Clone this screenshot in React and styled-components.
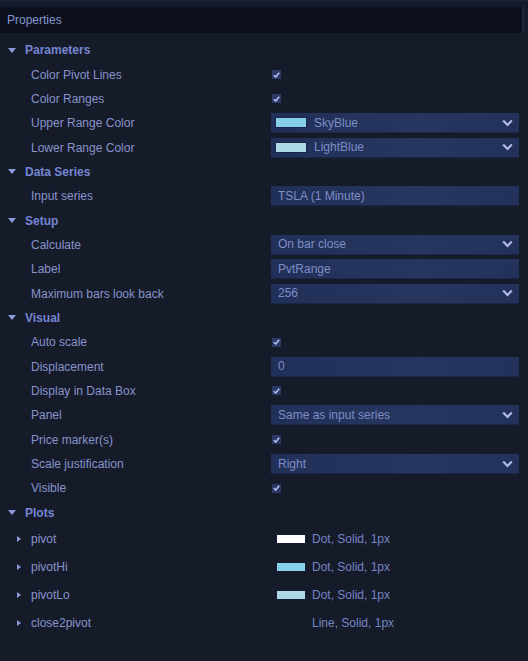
import React from 'react'
import styled, { createGlobalStyle } from 'styled-components'

const GlobalStyle = createGlobalStyle`
    html, body {
        margin: 0;
        padding: 0;
        background: #161b2a;
    }
    body {
        font-family: "Liberation Sans", Arial, sans-serif;
        font-size: 12px;
    }
`

const Panel = styled.div`
    width: 528px;
    height: 661px;
    background: #161b2a;
    overflow: hidden;
    display: flex;
    flex-direction: column;
    padding-top: 5px;
    box-sizing: border-box;
    border-top: 1px solid #1d2335;
`

const TitleBar = styled.div`
    height: 27px;
    margin-right: 4px;
    background: #0b0f1c;
    border-top: 1px solid #10162a;
    border-right: 2px solid #1e2538;
    display: flex;
    align-items: center;
    padding-left: 7px;
    padding-bottom: 1px;
    color: #8797cf;
    font-size: 12px;
    box-sizing: border-box;
`

const List = styled.div`
    display: flex;
    flex-direction: column;
    padding-top: 5px;
`

const Row = styled.div`
    height: ${p => (p.$plot ? 28 : 24.35)}px;
    display: grid;
    grid-template-columns: 271px 248px;
    align-items: center;
`

const SectionRow = styled.div`
    height: 24.35px;
    display: flex;
    align-items: center;
    gap: 9px;
    padding-left: 8px;
    color: #7486d2;
    font-weight: bold;
    font-size: 12px;
`

const DownArrow = styled.span`
    width: 0;
    height: 0;
    border-left: 4px solid transparent;
    border-right: 4px solid transparent;
    border-top: 5px solid #8a9ad8;
`

const RightArrow = styled.span`
    width: 0;
    height: 0;
    border-top: 3.5px solid transparent;
    border-bottom: 3.5px solid transparent;
    border-left: 4px solid #8a9ad8;
`

const Label = styled.div`
    padding-left: 31px;
    color: #8893cb;
    white-space: nowrap;
`

const PlotLabel = styled.div`
    display: flex;
    align-items: center;
    gap: 10px;
    padding-left: 17px;
    color: #8893cb;
`

const Check = styled.span`
    width: 9px;
    height: 9px;
    margin-left: 1px;
    background: #2a3966;
    display: flex;
    align-items: center;
    justify-content: center;
`

const Field = styled.div`
    height: 20px;
    display: flex;
    align-items: center;
    padding-left: ${p => (p.$swatch ? 5 : 7)}px;
    padding-right: 6px;
    gap: 8px;
    background: linear-gradient(90deg, #213058 0%, #26365f 60%, #23325a 100%);
    border-bottom: 1px solid #1b2646;
    color: #7f8dc6;
    box-sizing: border-box;
`

const FieldText = styled.span`
    flex: 1;
    white-space: nowrap;
`

const Swatch = styled.span`
    width: ${p => p.$w || 30}px;
    height: ${p => p.$h || 9}px;
    background: ${p => p.$color};
    box-shadow: 0 0 0 1px rgba(20, 30, 60, 0.6);
    flex-shrink: 0;
`

const PlotValue = styled.div`
    display: flex;
    align-items: center;
    gap: 7px;
    padding-left: ${p => (p.$noSwatch ? 41 : 6)}px;
    color: #7584c4;
`

const CheckIcon = () => (
    <svg width="7" height="6" viewBox="0 0 7 6">
        <path d="M0.8 3.2 L2.7 5 L6.2 0.8" fill="none" stroke="#b8c2ee" strokeWidth="1.5" />
    </svg>
)

const Chevron = () => (
    <svg width="11" height="8" viewBox="0 0 11 8">
        <path d="M1.2 1.5 L5.5 6 L9.8 1.5" fill="none" stroke="#aeb9ec" strokeWidth="2.2" />
    </svg>
)

const Section = ({ title }) => (
    <SectionRow>
        <DownArrow />
        {title}
    </SectionRow>
)

const CheckRow = ({ label }) => (
    <Row>
        <Label>{label}</Label>
        <div><Check><CheckIcon /></Check></div>
    </Row>
)

const InputRow = ({ label, value }) => (
    <Row>
        <Label>{label}</Label>
        <Field><FieldText>{value}</FieldText></Field>
    </Row>
)

const SelectRow = ({ label, value, color }) => (
    <Row>
        <Label>{label}</Label>
        <Field $swatch={!!color}>
            {color && <Swatch $color={color} />}
            <FieldText>{value}</FieldText>
            <Chevron />
        </Field>
    </Row>
)

const PlotRow = ({ name, color, value }) => (
    <Row $plot>
        <PlotLabel><RightArrow />{name}</PlotLabel>
        <PlotValue $noSwatch={!color}>
            {color && <Swatch $color={color} $w={28} $h={8} />}
            {value}
        </PlotValue>
    </Row>
)

const App = () => (
    <>
        <GlobalStyle />
        <Panel>
            <TitleBar>Properties</TitleBar>
            <List>
                <Section title="Parameters" />
                <CheckRow label="Color Pivot Lines" />
                <CheckRow label="Color Ranges" />
                <SelectRow label="Upper Range Color" value="SkyBlue" color="#87ceeb" />
                <SelectRow label="Lower Range Color" value="LightBlue" color="#add8e6" />

                <Section title="Data Series" />
                <InputRow label="Input series" value="TSLA (1 Minute)" />

                <Section title="Setup" />
                <SelectRow label="Calculate" value="On bar close" />
                <InputRow label="Label" value="PvtRange" />
                <SelectRow label="Maximum bars look back" value="256" />

                <Section title="Visual" />
                <CheckRow label="Auto scale" />
                <InputRow label="Displacement" value="0" />
                <CheckRow label="Display in Data Box" />
                <SelectRow label="Panel" value="Same as input series" />
                <CheckRow label="Price marker(s)" />
                <SelectRow label="Scale justification" value="Right" />
                <CheckRow label="Visible" />

                <Section title="Plots" />
                <PlotRow name="pivot" color="#ffffff" value="Dot, Solid, 1px" />
                <PlotRow name="pivotHi" color="#87ceeb" value="Dot, Solid, 1px" />
                <PlotRow name="pivotLo" color="#add8e6" value="Dot, Solid, 1px" />
                <PlotRow name="close2pivot" value="Line, Solid, 1px" />
            </List>
        </Panel>
    </>
)

export default App
